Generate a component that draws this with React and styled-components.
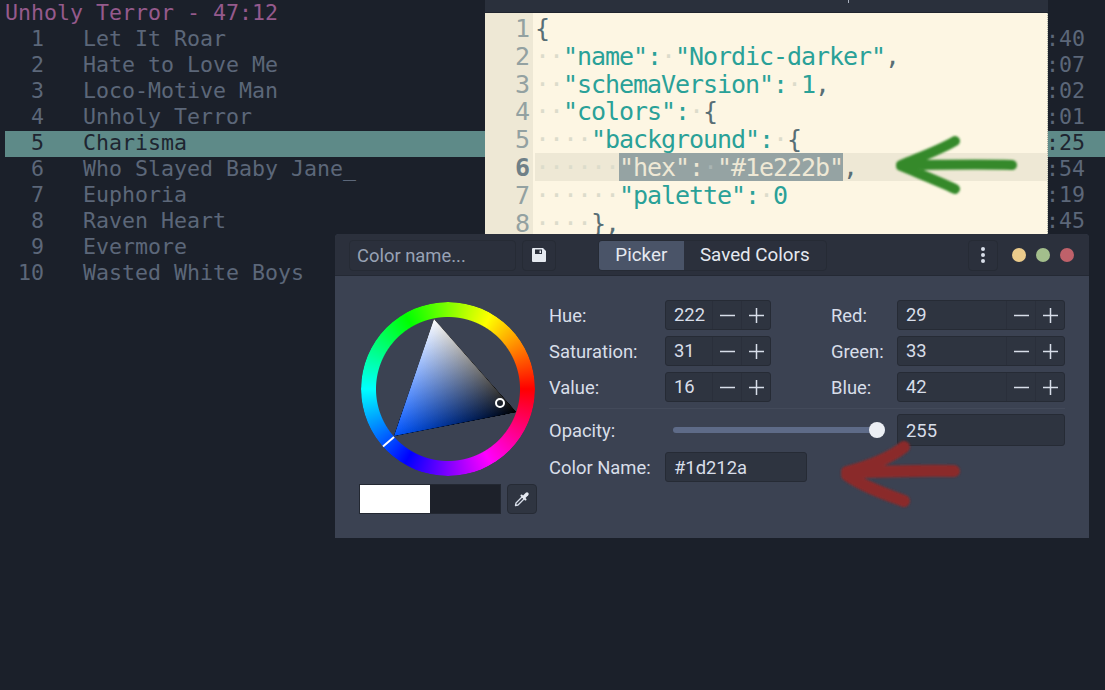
import React from 'react';
import styled, { createGlobalStyle } from 'styled-components';

const Global = createGlobalStyle`
  html, body { margin: 0; padding: 0; background: #1b202a; }
  body { width: 1105px; height: 690px; overflow: hidden; }
`;

const Desktop = styled.div`
  position: relative;
  width: 1105px;
  height: 690px;
  overflow: hidden;
  background: #1b202a;
`;

/* ---------- terminal ---------- */
const Terminal = styled.div`
  padding: 1px 0 0 5px;
  font-family: "DejaVu Sans Mono", monospace;
  font-size: 21.6px;
  line-height: 24px;
  white-space: pre;
`;
const AlbumTitle = styled.div`
  height: 26px;
  color: #955a8c;
`;
const Track = styled.div`
  display: flex;
  justify-content: space-between;
  height: 26px;
  padding-right: 20px;
  color: ${p => (p.$active ? '#1e2530' : '#5c6779')};
  background: ${p => (p.$active ? '#5e8a88' : 'transparent')};
`;

/* ---------- editor window ---------- */
const Editor = styled.div`
  position: absolute;
  left: 485px;
  top: 0;
  width: 563px;
  height: 240px;
  display: flex;
  flex-direction: column;
  background: #fdf6e3;
  overflow: hidden;
`;
const EditorTitle = styled.div`
  height: 12px;
  flex: none;
  display: flex;
  justify-content: center;
  background: #2a303c;
  border-bottom: 1px solid #1f242e;
`;
const TitleTick = styled.span`
  width: 1px;
  height: 3px;
  margin-left: 163px;
  background: #aab2c0;
`;
const CodeArea = styled.div`
  flex: 1;
  padding-top: 1px;
  border-right: 1px dotted #a9aea3;
  font-family: "DejaVu Sans Mono", monospace;
  font-size: 25px;
  letter-spacing: -1.05px;
  line-height: 29px;
  white-space: pre;
  background: linear-gradient(to right, #eee8d5 48px, #fdf6e3 48px);
`;
const CodeLine = styled.div`
  display: flex;
  height: 27.8px;
  overflow: hidden;
  color: #2aa198;
`;
const LineNo = styled.span`
  flex: none;
  width: 44px;
  margin-right: 6px;
  text-align: right;
  color: ${p => (p.$current ? '#6f8087' : '#93a1a1')};
  font-weight: ${p => (p.$current ? 700 : 400)};
`;
const CodeText = styled.span`
  flex: 1;
  background: ${p => (p.$current ? '#eee8d5' : 'transparent')};
`;
const Dot = styled.span`color: #dcdccb;`;
const Punct = styled.span`color: #586e75;`;
const Selection = styled.span`
  background: #95a3a3;
  color: #eee8d5;
`;
const SelDot = styled.span`color: #aab5b3;`;

/* ---------- picker window ---------- */
const Picker = styled.div`
  position: absolute;
  left: 335px;
  top: 234px;
  width: 754px;
  height: 304px;
  display: flex;
  flex-direction: column;
  background: #3b4252;
  border-radius: 4px 4px 0 0;
  font-family: Roboto, sans-serif;
  font-size: 18.4px;
  color: #d8dee9;
`;
const Header = styled.div`
  height: 42px;
  flex: none;
  display: flex;
  align-items: center;
  padding: 1px 14px 0;
  box-sizing: border-box;
  background: #2b303c;
  border-radius: 4px 4px 0 0;
  border-bottom: 1px solid #242934;
`;
const NameField = styled.div`
  width: 167px;
  height: 31px;
  box-sizing: border-box;
  padding-left: 7px;
  display: flex;
  align-items: center;
  background: #2b303c;
  border: 1px solid #262b35;
  border-radius: 4px;
  color: #98a2b5;
`;
const IconButton = styled.div`
  width: ${p => p.$w || 34}px;
  height: 31px;
  margin-left: ${p => p.$ml || 0}px;
  flex: none;
  box-sizing: border-box;
  display: flex;
  align-items: center;
  justify-content: center;
  background: #2b303c;
  border: 1px solid #262b35;
  border-radius: 4px;
`;
const Tabs = styled.div`
  display: flex;
  height: 31px;
  margin-left: 42px;
  width: 229px;
  box-sizing: border-box;
  border: 1px solid #262b35;
  border-radius: 4px;
  overflow: hidden;
  font-size: 18.8px;
`;
const Tab = styled.div`
  display: flex;
  align-items: center;
  justify-content: center;
  width: ${p => p.$w}px;
  background: ${p => (p.$active ? '#4a5468' : 'transparent')};
  color: #e5e9f0;
`;
const Lights = styled.div`
  display: flex;
  gap: 10px;
  margin-left: 14px;
`;
const Light = styled.span`
  width: 14px;
  height: 14px;
  border-radius: 50%;
  background: ${p => p.$c};
`;
const Body = styled.div`
  flex: 1;
  display: flex;
  padding: 24px 24px 0 24px;
`;
const WheelColumn = styled.div`
  width: 178px;
  flex: none;
  margin-right: 12px;
  display: flex;
  flex-direction: column;
`;
const WheelBox = styled.div`
  position: relative;
  width: 174px;
  height: 174px;
  margin: 2px 0 8px 2px;
`;
const Ring = styled.div`
  position: absolute;
  inset: 0;
  border-radius: 50%;
  background: conic-gradient(from 90deg, #f00, #f0f, #00f, #0ff, #0f0, #ff0, #f00);
  -webkit-mask: radial-gradient(circle closest-side, transparent 71.5px, #000 72.5px);
  mask: radial-gradient(circle closest-side, transparent 71.5px, #000 72.5px);
`;
const WheelArt = styled.svg`
  position: absolute;
  inset: 0;
  isolation: isolate;
`;
const BlendPoly = styled.polygon`
  mix-blend-mode: plus-lighter;
`;
const SwatchRow = styled.div`
  display: flex;
  gap: 6px;
`;
const Swatch = styled.div`
  display: flex;
  width: 142px;
  height: 30px;
  box-sizing: border-box;
  border: 1px solid #232832;
`;
const SwatchHalf = styled.div`
  flex: 1;
  background: ${p => p.$c};
`;
const Pick = styled.div`
  width: 30px;
  height: 30px;
  box-sizing: border-box;
  display: flex;
  align-items: center;
  justify-content: center;
  background: #2f3541;
  border: 1px solid #262b35;
  border-radius: 4px;
`;
const Fields = styled.div`
  width: 516px;
  display: flex;
  flex-direction: column;
`;
const SpinGrid = styled.div`
  display: grid;
  grid-template-columns: 116px 106px 60px 66px 168px;
  grid-auto-rows: 30px;
  row-gap: 6px;
  align-items: center;
`;
const Label = styled.span`
  color: #d8dee9;
`;
const Spin = styled.div`
  display: flex;
  height: 30px;
  box-sizing: border-box;
  background: #2e3440;
  border: 1px solid #262b35;
  border-radius: 3px;
`;
const SpinValue = styled.span`
  flex: 1;
  padding-left: 8px;
  line-height: 28px;
`;
const SpinBtn = styled.span`
  width: 29px;
  flex: none;
  box-sizing: border-box;
  display: flex;
  align-items: center;
  justify-content: center;
  border-left: 1px solid #2a2f3b;
`;
const Separator = styled.div`
  height: 1px;
  margin-top: 6px;
  background: #434a5a;
`;
const OpacityRow = styled.div`
  display: grid;
  grid-template-columns: 124px 224px 168px;
  align-items: center;
  margin-top: 5px;
  height: 32px;
`;
const Slider = styled.div`
  position: relative;
  width: 212px;
  height: 6px;
  border-radius: 3px;
  background: #5e6b88;
`;
const Thumb = styled.span`
  position: absolute;
  right: 0;
  top: -5px;
  width: 16px;
  height: 16px;
  border-radius: 50%;
  background: #eceff4;
`;
const TextField = styled.div`
  height: ${p => p.$h}px;
  width: ${p => p.$w}px;
  box-sizing: border-box;
  padding-left: 8px;
  display: flex;
  align-items: center;
  background: #2e3440;
  border: 1px solid #262b35;
  border-radius: 3px;
`;
const NameRow = styled.div`
  display: grid;
  grid-template-columns: 116px auto;
  align-items: center;
  margin-top: 6px;
`;

/* ---------- annotations ---------- */
const Scribble = styled.svg`
  position: absolute;
  left: 0;
  top: 0;
  pointer-events: none;
`;

const tracks = [
  ['  1   Let It Roar', ':40'],
  ['  2   Hate to Love Me', ':07'],
  ['  3   Loco-Motive Man', ':02'],
  ['  4   Unholy Terror', ':01'],
  ['  5   Charisma', ':25', true],
  ['  6   Who Slayed Baby Jane_', ':54'],
  ['  7   Euphoria', ':19'],
  ['  8   Raven Heart', ':45'],
  ['  9   Evermore', ''],
  [' 10   Wasted White Boys', ''],
];

const dots = n => <Dot>{'·'.repeat(n)}</Dot>;

const code = [
  <Punct>{'{'}</Punct>,
  <>{dots(2)}"name":{dots(1)}"Nordic-darker"<Punct>,</Punct></>,
  <>{dots(2)}"schemaVersion":{dots(1)}1<Punct>,</Punct></>,
  <>{dots(2)}"colors":{dots(1)}<Punct>{'{'}</Punct></>,
  <>{dots(4)}"background":{dots(1)}<Punct>{'{'}</Punct></>,
  <>{dots(6)}<Selection>"hex":<SelDot>·</SelDot>"#1e222b"</Selection><Punct>,</Punct></>,
  <>{dots(6)}"palette":{dots(1)}0</>,
  <>{dots(4)}<Punct>{'},'}</Punct></>,
];

const Minus = () => (
  <svg width="15" height="15" viewBox="0 0 15 15"><path d="M0 7.5h15" stroke="#d8dee9" strokeWidth="1.5" /></svg>
);
const Plus = () => (
  <svg width="15" height="15" viewBox="0 0 15 15"><path d="M0 7.5h15M7.5 0v15" stroke="#d8dee9" strokeWidth="1.5" /></svg>
);

const SpinBox = ({ value }) => (
  <Spin>
    <SpinValue>{value}</SpinValue>
    <SpinBtn><Minus /></SpinBtn>
    <SpinBtn><Plus /></SpinBtn>
  </Spin>
);

const foot = (p, a, b) => {
  const dx = b[0] - a[0], dy = b[1] - a[1];
  const t = ((p[0] - a[0]) * dx + (p[1] - a[1]) * dy) / (dx * dx + dy * dy);
  return [a[0] + t * dx, a[1] + t * dy];
};

const W = [73, 17], K = [155, 110], H = [33, 134];
const triangle = `${W.join(',')} ${K.join(',')} ${H.join(',')}`;
const fw = foot(W, K, H);
const fh = foot(H, W, K);

const ColorWheel = () => (
  <WheelBox>
    <Ring />
    <WheelArt width="174" height="174" viewBox="0 0 174 174">
      <defs>
        <linearGradient id="gw" gradientUnits="userSpaceOnUse" x1={W[0]} y1={W[1]} x2={fw[0]} y2={fw[1]}>
          <stop offset="0" stopColor="#fff" />
          <stop offset="1" stopColor="#000" />
        </linearGradient>
        <linearGradient id="gh" gradientUnits="userSpaceOnUse" x1={H[0]} y1={H[1]} x2={fh[0]} y2={fh[1]}>
          <stop offset="0" stopColor="#0055ff" />
          <stop offset="1" stopColor="#000" />
        </linearGradient>
      </defs>
      <polygon points={triangle} fill="#000" />
      <BlendPoly points={triangle} fill="url(#gw)" />
      <BlendPoly points={triangle} fill="url(#gh)" />
      <path d="M22 144.5L33 135" stroke="#fff" strokeWidth="2" />
      <circle cx="139" cy="101" r="4" fill="none" stroke="#fff" strokeWidth="2" />
    </WheelArt>
  </WheelBox>
);

export default function App() {
  return (
    <Desktop>
      <Global />
      <Terminal>
        <AlbumTitle>Unholy Terror - 47:12</AlbumTitle>
        {tracks.map(([name, time, active]) => (
          <Track key={name} $active={active}>
            <span>{name}</span>
            <span>{time}</span>
          </Track>
        ))}
      </Terminal>

      <Editor>
        <EditorTitle><TitleTick /></EditorTitle>
        <CodeArea>
          {code.map((content, i) => (
            <CodeLine key={i}>
              <LineNo $current={i === 5}>{i + 1}</LineNo>
              <CodeText $current={i === 5}>{content}</CodeText>
            </CodeLine>
          ))}
        </CodeArea>
      </Editor>

      <Picker>
        <Header>
          <NameField>Color name...</NameField>
          <IconButton $ml={6}>
            <svg width="14" height="14" viewBox="0 0 14 14">
              <path fillRule="evenodd" fill="#e5e9f0" d="M1 0h10l3 3v10a1 1 0 0 1-1 1H1a1 1 0 0 1-1-1V1a1 1 0 0 1 1-1zM3 1.5v4.5h7V1.5zM7.5 2.5h1.5v2.5H7.5z" />
            </svg>
          </IconButton>
          <Tabs>
            <Tab $w={85} $active>Picker</Tab>
            <Tab $w={143}>Saved Colors</Tab>
          </Tabs>
          <IconButton $w={30} $ml={141}>
            <svg width="4" height="16" viewBox="0 0 4 16" fill="#d8dee9">
              <circle cx="2" cy="2" r="2" /><circle cx="2" cy="8" r="2" /><circle cx="2" cy="14" r="2" />
            </svg>
          </IconButton>
          <Lights>
            <Light $c="#ebcb8b" />
            <Light $c="#a3be8c" />
            <Light $c="#bf616a" />
          </Lights>
        </Header>
        <Body>
          <WheelColumn>
            <ColorWheel />
            <SwatchRow>
              <Swatch>
                <SwatchHalf $c="#ffffff" />
                <SwatchHalf $c="#1d212a" />
              </Swatch>
              <Pick>
                <svg width="18" height="18" viewBox="0 0 18 18" fill="none" strokeLinecap="round">
                  <path d="M2.5 15.5L3 13L9.5 6.5L11.5 8.5L5 15Z" stroke="#d8dee9" strokeWidth="1.3" strokeLinejoin="round" />
                  <path d="M8.5 5.5L12.5 9.5" stroke="#e5e9f0" strokeWidth="2" />
                  <path d="M11 7L14 4" stroke="#e5e9f0" strokeWidth="3.4" />
                </svg>
              </Pick>
            </SwatchRow>
          </WheelColumn>
          <Fields>
            <SpinGrid>
              <Label>Hue:</Label><SpinBox value="222" /><span /><Label>Red:</Label><SpinBox value="29" />
              <Label>Saturation:</Label><SpinBox value="31" /><span /><Label>Green:</Label><SpinBox value="33" />
              <Label>Value:</Label><SpinBox value="16" /><span /><Label>Blue:</Label><SpinBox value="42" />
            </SpinGrid>
            <Separator />
            <OpacityRow>
              <Label>Opacity:</Label>
              <Slider><Thumb /></Slider>
              <TextField $w={168} $h={32}>255</TextField>
            </OpacityRow>
            <NameRow>
              <Label>Color Name:</Label>
              <TextField $w={142} $h={30}>#1d212a</TextField>
            </NameRow>
          </Fields>
        </Body>
      </Picker>

      <Scribble width="1105" height="690" viewBox="0 0 1105 690" fill="none" strokeLinecap="round" strokeLinejoin="round">
        <defs>
          <filter id="soft"><feGaussianBlur stdDeviation="0.9" /></filter>
        </defs>
        <g filter="url(#soft)">
          <path d="M1012 165C980 164 935 165 901 165C920 157 940 150 955 141M901 166C920 174 940 182 955 189" stroke="#35892a" strokeWidth="10" />
          <path d="M954 471C920 470 880 472 847 472C870 466 890 458 904 447M847 475C860 485 885 494 904 501" stroke="#8a2b2b" strokeWidth="12" />
        </g>
      </Scribble>
    </Desktop>
  );
}
